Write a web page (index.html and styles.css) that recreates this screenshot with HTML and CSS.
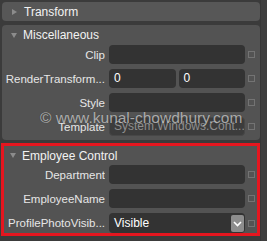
FILE: index.html
```html
<!DOCTYPE html>
<html lang="en">
<head>
    <meta charset="UTF-8">
    <title>Properties</title>
    <link rel="stylesheet" href="styles.css">
</head>
<body>
    <div class="frame">
        <div class="panel">
            <div class="section collapsed">
                <div class="header"><span class="arrow right"></span>Transform</div>
            </div>

            <div class="section misc">
                <div class="header"><span class="arrow down"></span>Miscellaneous</div>
                <div class="row">
                    <label>Clip</label>
                    <div class="box"></div>
                    <span class="check"></span>
                </div>
                <div class="row">
                    <label>RenderTransform...</label>
                    <div class="pair">
                        <div class="box">0</div>
                        <div class="box">0</div>
                    </div>
                    <span class="check"></span>
                </div>
                <div class="row">
                    <label>Style</label>
                    <div class="box"></div>
                    <span class="check"></span>
                </div>
                <div class="row">
                    <label>Template</label>
                    <div class="box disabled">System.Windows.Cont...</div>
                    <span class="check"></span>
                </div>
            </div>

            <div class="section employee">
                <div class="header"><span class="arrow down"></span>Employee Control</div>
                <div class="row">
                    <label>Department</label>
                    <div class="box"></div>
                    <span class="check"></span>
                </div>
                <div class="row">
                    <label>EmployeeName</label>
                    <div class="box"></div>
                    <span class="check"></span>
                </div>
                <div class="row">
                    <label>ProfilePhotoVisib...</label>
                    <div class="box select">Visible
                        <span class="drop">
                            <svg width="9" height="6" viewBox="0 0 9 6"><path d="M1 1 L4.5 4.5 L8 1" fill="none" stroke="#fff" stroke-width="1.6"/></svg>
                        </span>
                    </div>
                    <span class="check"></span>
                </div>
            </div>
        </div>
        <div class="scroll"></div>
        <div class="watermark">&copy; www.kunal-chowdhury.com</div>
    </div>
</body>
</html>
```

FILE: styles.css
```css
body {
    margin: 0;
    background-color: #3b3b3b;
    font-family: 'Liberation Sans', Arial, sans-serif;
    font-size: 12px;
    color: #e6e6e6;
}
.frame {
    position: relative;
    width: 267px;
    height: 241px;
    overflow: hidden;
    display: flex;
}
.panel {
    width: 259px;
    padding: 2px 0 0 2px;
    display: flex;
    flex-direction: column;
    gap: 4px;
}
.scroll {
    width: 6px;
    background-color: #3e3e3e;
    border-left: 1px solid #363636;
}
.section {
    background-color: #535353;
    border-radius: 4px;
}
.collapsed {
    background-color: #575757;
}
.header {
    height: 19px;
    display: flex;
    align-items: center;
    padding-left: 9px;
    color: #f2f2f2;
    font-size: 12px;
}
.misc .header {
    height: 20px;
}
.arrow {
    width: 0;
    height: 0;
}
.arrow.right {
    border-top: 3.5px solid transparent;
    border-bottom: 3.5px solid transparent;
    border-left: 5px solid #8c8c8c;
    margin-left: 1px;
    margin-right: 7px;
}
.arrow.down {
    border-left: 3.5px solid transparent;
    border-right: 3.5px solid transparent;
    border-top: 5px solid #8c8c8c;
    margin-right: 6px;
}
.misc {
    padding-bottom: 4px;
}
.employee {
    margin-left: -1px;
    margin-top: -1px;
    border: 3px solid #e5161f;
    border-radius: 0;
    padding-bottom: 1px;
}
.employee .header {
    padding-left: 6px;
}
.row {
    display: grid;
    grid-template-columns: 1fr 136px 7px;
    column-gap: 3px;
    align-items: center;
    height: 19px;
    margin-bottom: 5px;
    padding: 0 5px 0 2px;
}
.row:last-child {
    margin-bottom: 0;
}
.employee .row {
    padding: 0 2px 0 0;
}
.row label {
    text-align: right;
    white-space: nowrap;
    overflow: hidden;
    font-size: 11.5px;
    margin-right: 1px;
    color: #e6e6e6;
}
.box {
    position: relative;
    height: 19px;
    line-height: 19px;
    padding-left: 5px;
    box-sizing: border-box;
    background-color: #333333;
    border-radius: 4px;
    color: #ffffff;
    white-space: nowrap;
    overflow: hidden;
}
.pair {
    display: grid;
    grid-template-columns: 1fr 1fr;
    gap: 3px;
}
.disabled {
    background-color: #3c3c3c;
    border: 1px solid #474747;
    line-height: 17px;
    padding-left: 4px;
    color: #8e8e8e;
}
.select {
    height: 20px;
    line-height: 20px;
}
.drop {
    position: absolute;
    right: 1px;
    top: 2px;
    width: 13px;
    height: 17px;
    background-color: #8d8d8d;
    border-radius: 2px;
    display: flex;
    align-items: center;
    justify-content: center;
}
.check {
    width: 5px;
    height: 5px;
    border: 1px solid #737373;
}
.watermark {
    position: absolute;
    left: 40px;
    top: 109px;
    font-size: 15.5px;
    color: rgba(225, 225, 225, 0.7);
    text-shadow: 0 0 1px rgba(0, 0, 0, 0.4);
    white-space: nowrap;
}
```
